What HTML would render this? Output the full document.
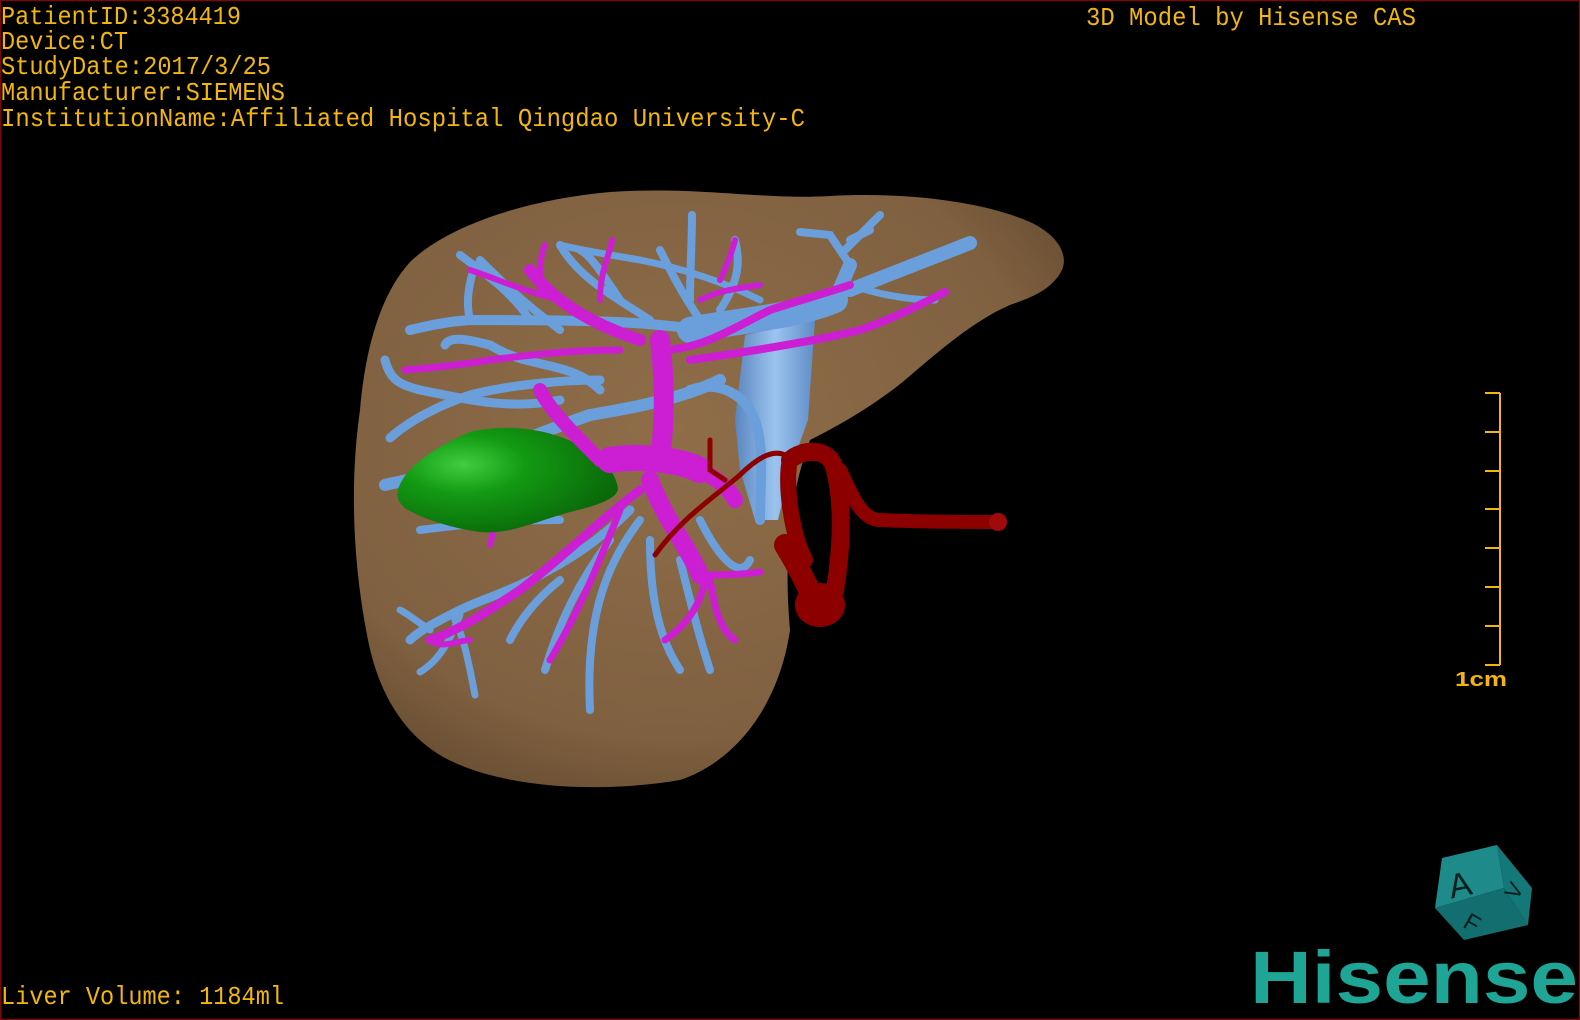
<!DOCTYPE html>
<html><head><meta charset="utf-8"><style>
html,body{margin:0;padding:0;background:#000;width:1580px;height:1020px;overflow:hidden}
svg{display:block}
text{font-family:"Liberation Mono",monospace;fill:#f2b60c}
</style></head><body>
<svg width="1580" height="1020" viewBox="0 0 1580 1020" xmlns="http://www.w3.org/2000/svg">
<defs>
<radialGradient id="lv" cx="0.45" cy="0.4" r="0.65">
<stop offset="0" stop-color="#8f6d49"/><stop offset="0.8" stop-color="#7f6040"/><stop offset="1" stop-color="#6a4f33"/>
</radialGradient>
<radialGradient id="gb" cx="0.3" cy="0.35" r="0.7">
<stop offset="0" stop-color="#3fcf3f"/><stop offset="0.4" stop-color="#139a13"/><stop offset="1" stop-color="#0a6a0a"/>
</radialGradient>
<linearGradient id="ivc" x1="0" x2="1"><stop offset="0" stop-color="#5a86c0"/><stop offset="0.5" stop-color="#9cc4ef"/><stop offset="1" stop-color="#5f8cc6"/></linearGradient>
</defs>
<rect x="0" y="0" width="1580" height="1020" fill="#000"/>
<rect x="0.5" y="0.5" width="1579" height="1019" fill="none" stroke="#7a0a0a" stroke-width="1.5"/>

<!-- liver -->
<path fill="url(#lv)" d="M410,262 C445,228 520,200 610,192 C700,186 760,200 830,196 C900,192 980,200 1030,222 C1060,236 1068,256 1062,270 C1052,290 1030,298 1010,305 C975,320 940,350 905,380 C875,405 840,425 810,440 C795,480 782,540 790,630 C780,700 740,760 680,780 C610,792 520,790 460,765 C410,745 380,700 368,640 C352,560 350,480 360,410 C365,350 380,295 410,262 Z"/>

<!-- IVC -->
<path fill="url(#ivc)" d="M745,335 L815,320 L808,420 L790,470 L778,520 L755,520 L740,470 L735,420 Z"/>
<!-- blue veins -->
<g fill="none" stroke="#6b9fdc" stroke-linecap="round">
<path stroke-width="26" d="M690,330 C740,320 790,318 835,300"/>
<path stroke-width="14" d="M835,300 L850,265 M850,290 C900,270 940,255 970,243"/>
<path stroke-width="8" d="M850,265 L830,235 L800,232 M845,250 L880,215 M850,240 L870,230"/>
<path stroke-width="10" d="M700,330 C640,320 560,320 470,320 C440,322 420,328 410,330"/>
<path stroke-width="8" d="M650,320 C620,300 580,280 560,245 M620,300 C600,270 590,255 580,250 M700,320 C680,290 670,270 660,250 M720,310 C740,280 740,260 735,240 M690,300 C690,270 692,240 692,215"/>
<path stroke-width="8" d="M560,330 C520,300 500,280 480,260 M530,320 C510,290 480,270 460,255 M470,320 C465,300 470,280 475,265"/>
<path stroke-width="7" d="M760,300 C730,285 690,270 640,260 C610,255 580,250 560,245 M840,280 C860,290 900,300 935,300"/>
<path stroke-width="12" d="M720,380 C680,400 620,410 590,415 C560,425 500,450 440,470 C415,480 395,482 385,485"/>
<path stroke-width="9" d="M600,380 C560,380 510,385 470,395 C440,405 410,420 390,438 M600,390 C570,360 530,370 490,345 C470,340 450,335 445,345"/>
<path stroke-width="9" d="M560,400 C510,410 470,400 420,390 C400,385 390,380 385,360"/>
<path stroke-width="10" d="M690,390 C720,380 745,395 755,420 C765,450 760,480 760,520"/>
<path stroke-width="9" d="M630,510 C600,540 570,560 530,580 C500,595 480,600 460,610 C440,620 420,630 410,640"/>
<path stroke-width="7" d="M460,615 C450,640 440,660 420,672 M455,620 C465,640 470,670 475,695 M430,630 C415,620 405,612 400,610"/>
<path stroke-width="8" d="M640,520 C610,560 585,610 590,710 M610,540 C580,580 560,620 545,670 M650,540 C650,600 660,640 680,670 M680,560 C690,600 700,640 710,670 M560,580 C535,600 520,620 510,640 M700,520 C720,560 740,580 750,560"/>
<path stroke-width="8" d="M560,520 C500,520 460,525 420,530 M600,460 C560,470 520,480 490,500"/>
</g>
<path fill="none" stroke="#cc1fd4" stroke-width="6" stroke-linecap="round" d="M540,470 C520,480 500,500 490,545"/>
<!-- gallbladder -->
<path fill="url(#gb)" d="M398,490 C405,465 440,445 470,432 C500,425 540,426 575,443 C600,455 615,470 618,488 C618,498 600,505 570,512 C540,520 510,535 480,532 C450,528 420,518 405,508 C398,502 396,496 398,490 Z"/>
<!-- magenta portal -->
<g fill="none" stroke="#cc1fd4" stroke-linecap="round">
<path stroke-width="26" d="M610,460 C640,455 680,460 700,470"/>
<path stroke-width="20" d="M660,460 C665,420 665,380 660,340"/>
<path stroke-width="18" d="M650,480 C665,520 690,550 700,575"/>
<path stroke-width="16" d="M700,470 C720,480 730,490 735,500"/>
<path stroke-width="14" d="M600,460 C570,430 550,410 540,390"/>
<path stroke-width="12" d="M640,340 C610,330 560,310 530,270"/>
<path stroke-width="8" d="M660,350 C700,350 730,330 770,310 C800,300 820,295 850,285"/>
<path stroke-width="8" d="M690,360 C760,350 820,340 860,330 C890,320 920,305 945,292"/>
<path stroke-width="7" d="M620,350 C570,350 530,355 490,360 C460,365 430,368 405,370"/>
<path stroke-width="6" d="M560,300 C520,290 500,280 470,270 M540,290 C540,270 540,255 545,245 M600,300 C600,270 610,255 612,240 M700,300 C720,290 740,288 760,285 M720,280 C730,260 735,240 735,240"/>
<path stroke-width="9" d="M640,490 C600,520 560,560 520,590 C490,610 460,630 430,640"/>
<path stroke-width="7" d="M620,510 C600,560 580,610 550,660 M700,575 C720,575 740,575 760,572 M705,580 C700,610 680,630 665,640 M710,580 C715,610 720,630 735,640"/>
<path stroke-width="6" d="M430,640 C440,650 460,640 470,640"/>
</g>
<!-- red artery -->
<g fill="none" stroke="#8c0000" stroke-linecap="round">
<path stroke-width="5" d="M655,555 C680,520 710,500 740,475 C760,455 775,450 785,455"/>
<path stroke-width="5" d="M710,440 L710,470 L725,480"/>
<path stroke-width="18" d="M790,460 C800,450 830,445 835,470 C845,510 840,560 835,590 C830,605 820,610 815,600"/>
<path stroke-width="14" d="M840,470 C850,490 860,520 880,520 C920,522 960,522 1000,522"/>
<path stroke-width="22" d="M785,545 C800,570 810,590 815,605"/>
<path stroke-width="16" d="M790,460 C785,480 790,530 805,560"/>
</g>
<circle cx="998" cy="522" r="9" fill="#a00a0a"/>
<ellipse cx="820" cy="605" rx="25" ry="22" fill="#8c0000"/>

<!-- text -->
<text x="1" y="24" font-size="26" textLength="240" lengthAdjust="spacingAndGlyphs">PatientID:3384419</text>
<text x="1" y="49" font-size="26" textLength="127" lengthAdjust="spacingAndGlyphs">Device:CT</text>
<text x="1" y="74" font-size="26" textLength="270" lengthAdjust="spacingAndGlyphs">StudyDate:2017/3/25</text>
<text x="1" y="100" font-size="26" textLength="284" lengthAdjust="spacingAndGlyphs">Manufacturer:SIEMENS</text>
<text x="1" y="126" font-size="26" textLength="804" lengthAdjust="spacingAndGlyphs">InstitutionName:Affiliated Hospital Qingdao University-C</text>
<text x="1086" y="25" font-size="26" textLength="330" lengthAdjust="spacingAndGlyphs">3D Model by Hisense CAS</text>
<text x="1" y="1004" font-size="26" textLength="283" lengthAdjust="spacingAndGlyphs">Liver Volume: 1184ml</text>

<!-- scale -->
<g stroke="#f2b60c" stroke-width="2" fill="none">
<path d="M1500,393 L1500,665 M1485,393 L1500,393 M1485,432 L1500,432 M1485,471 L1500,471 M1485,509 L1500,509 M1485,548 L1500,548 M1485,587 L1500,587 M1485,626 L1500,626 M1485,665 L1500,665"/>
</g>
<text x="1455" y="686" font-size="20" font-weight="bold" textLength="52" lengthAdjust="spacingAndGlyphs" style="font-family:'Liberation Sans',sans-serif">1cm</text>

<!-- cube -->
<polygon points="1442,858 1497,845 1504,888 1435,908" fill="#1f8a8a"/>
<polygon points="1497,845 1532,888 1528,925 1504,888" fill="#157878"/>
<polygon points="1435,908 1504,888 1528,925 1464,940" fill="#136e70"/>
<text x="1448" y="896" font-size="34" style="fill:#041f1f;font-family:'Liberation Sans',sans-serif" transform="rotate(-12 1462 882)">A</text>
<text x="1466" y="934" font-size="24" style="fill:#041f1f;font-family:'Liberation Sans',sans-serif" transform="rotate(30 1478 922)">F</text>
<text x="1506" y="898" font-size="22" style="fill:#041f1f;font-family:'Liberation Sans',sans-serif" transform="rotate(-60 1514 890)">V</text>

<!-- Hisense logo -->
<text x="1250" y="1003" font-size="74" font-weight="bold" style="fill:#1ea596;font-family:'Liberation Sans',sans-serif" textLength="328" lengthAdjust="spacingAndGlyphs">Hisense</text>
</svg>
</body></html>
